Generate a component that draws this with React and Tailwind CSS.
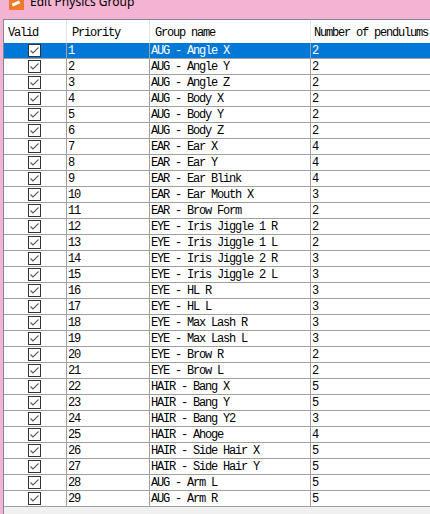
import React from "react";

const rows = [
  ["1", "AUG - Angle X", "2"],
  ["2", "AUG - Angle Y", "2"],
  ["3", "AUG - Angle Z", "2"],
  ["4", "AUG - Body X", "2"],
  ["5", "AUG - Body Y", "2"],
  ["6", "AUG - Body Z", "2"],
  ["7", "EAR - Ear X", "4"],
  ["8", "EAR - Ear Y", "4"],
  ["9", "EAR - Ear Blink", "4"],
  ["10", "EAR - Ear Mouth X", "3"],
  ["11", "EAR - Brow Form", "2"],
  ["12", "EYE - Iris Jiggle 1 R", "2"],
  ["13", "EYE - Iris Jiggle 1 L", "2"],
  ["14", "EYE - Iris Jiggle 2 R", "3"],
  ["15", "EYE - Iris Jiggle 2 L", "3"],
  ["16", "EYE - HL R", "3"],
  ["17", "EYE - HL L", "3"],
  ["18", "EYE - Max Lash R", "3"],
  ["19", "EYE - Max Lash L", "3"],
  ["20", "EYE - Brow R", "2"],
  ["21", "EYE - Brow L", "2"],
  ["22", "HAIR - Bang X", "5"],
  ["23", "HAIR - Bang Y", "5"],
  ["24", "HAIR - Bang Y2", "3"],
  ["25", "HAIR - Ahoge", "4"],
  ["26", "HAIR - Side Hair X", "5"],
  ["27", "HAIR - Side Hair Y", "5"],
  ["28", "AUG - Arm L", "5"],
  ["29", "AUG - Arm R", "5"],
];

function Check() {
  return (
    <div className="w-[13px] h-[13px] border border-[#333333] bg-white flex items-center justify-center">
      <svg width="11" height="11" viewBox="0 0 11 11">
        <polyline points="1.5,5.5 4,8 9.5,2.5" fill="none" stroke="#5a5a5a" strokeWidth="1.1" />
      </svg>
    </div>
  );
}

const mono = { fontFamily: '"Liberation Mono", "DejaVu Sans Mono", monospace' };

export default function App() {
  return (
    <div className="w-[430px] h-[514px] overflow-hidden bg-[#f4b3d3] flex flex-col">
      <div className="h-[19px] shrink-0 overflow-hidden">
        <div className="-mt-[6px] flex items-center pl-[9px] gap-[6px] h-[16px]">
          <div className="w-[15px] h-[16px] bg-[#f07a2a] rounded-[1px] relative">
            <div className="absolute left-[3px] top-[8px] w-[8px] h-[3px] bg-white -rotate-[25deg]" />
          </div>
          <span className="text-[12px] text-black leading-[16px]" style={{ fontFamily: '"Noto Sans", "Liberation Sans", sans-serif' }}>
            Edit Physics Group
          </span>
        </div>
      </div>
      <div className="ml-[3px] flex-1 border-l border-t border-[#828790] bg-white flex flex-col min-w-0 overflow-hidden text-[12px] tracking-[-1.2px] text-black" style={mono}>
        <div className="h-[23px] shrink-0 flex items-center bg-white">
          <div className="w-[63px] shrink-0 h-full border-r border-[#e5e5e5] flex items-center pl-[4px] pt-[2px]">Valid</div>
          <div className="w-[83px] shrink-0 h-full border-r border-[#e5e5e5] flex items-center pl-[5px] pt-[2px]">Priority</div>
          <div className="w-[161px] shrink-0 h-full border-r border-[#e5e5e5] flex items-center pl-[5px] pt-[2px]">Group name</div>
          <div className="w-[140px] shrink-0 h-full flex items-center pl-[3px] pt-[2px] whitespace-nowrap">Number of pendulums</div>
        </div>
        {rows.map((r, i) => {
          const sel = i === 0;
          return (
            <div
              key={r[0]}
              className={
                "h-[16px] shrink-0 flex border-b border-[#a0a0a0] leading-[16px] " +
                (sel ? "bg-[#0078d7] text-white" : "bg-white text-black")
              }
            >
              <div className="w-[63px] shrink-0 border-r border-[#a0a0a0] flex items-center justify-center pr-[2px]">
                <Check />
              </div>
              <div className="w-[83px] shrink-0 border-r border-[#a0a0a0] pl-[1px] whitespace-nowrap">{r[0]}</div>
              <div className="w-[161px] shrink-0 border-r border-[#a0a0a0] pl-[1px] whitespace-nowrap">{r[1]}</div>
              <div className="w-[140px] shrink-0 pl-[1px]">{r[2]}</div>
            </div>
          );
        })}
        <div className="flex-1 bg-[#f0f0f0]" />
      </div>
    </div>
  );
}
